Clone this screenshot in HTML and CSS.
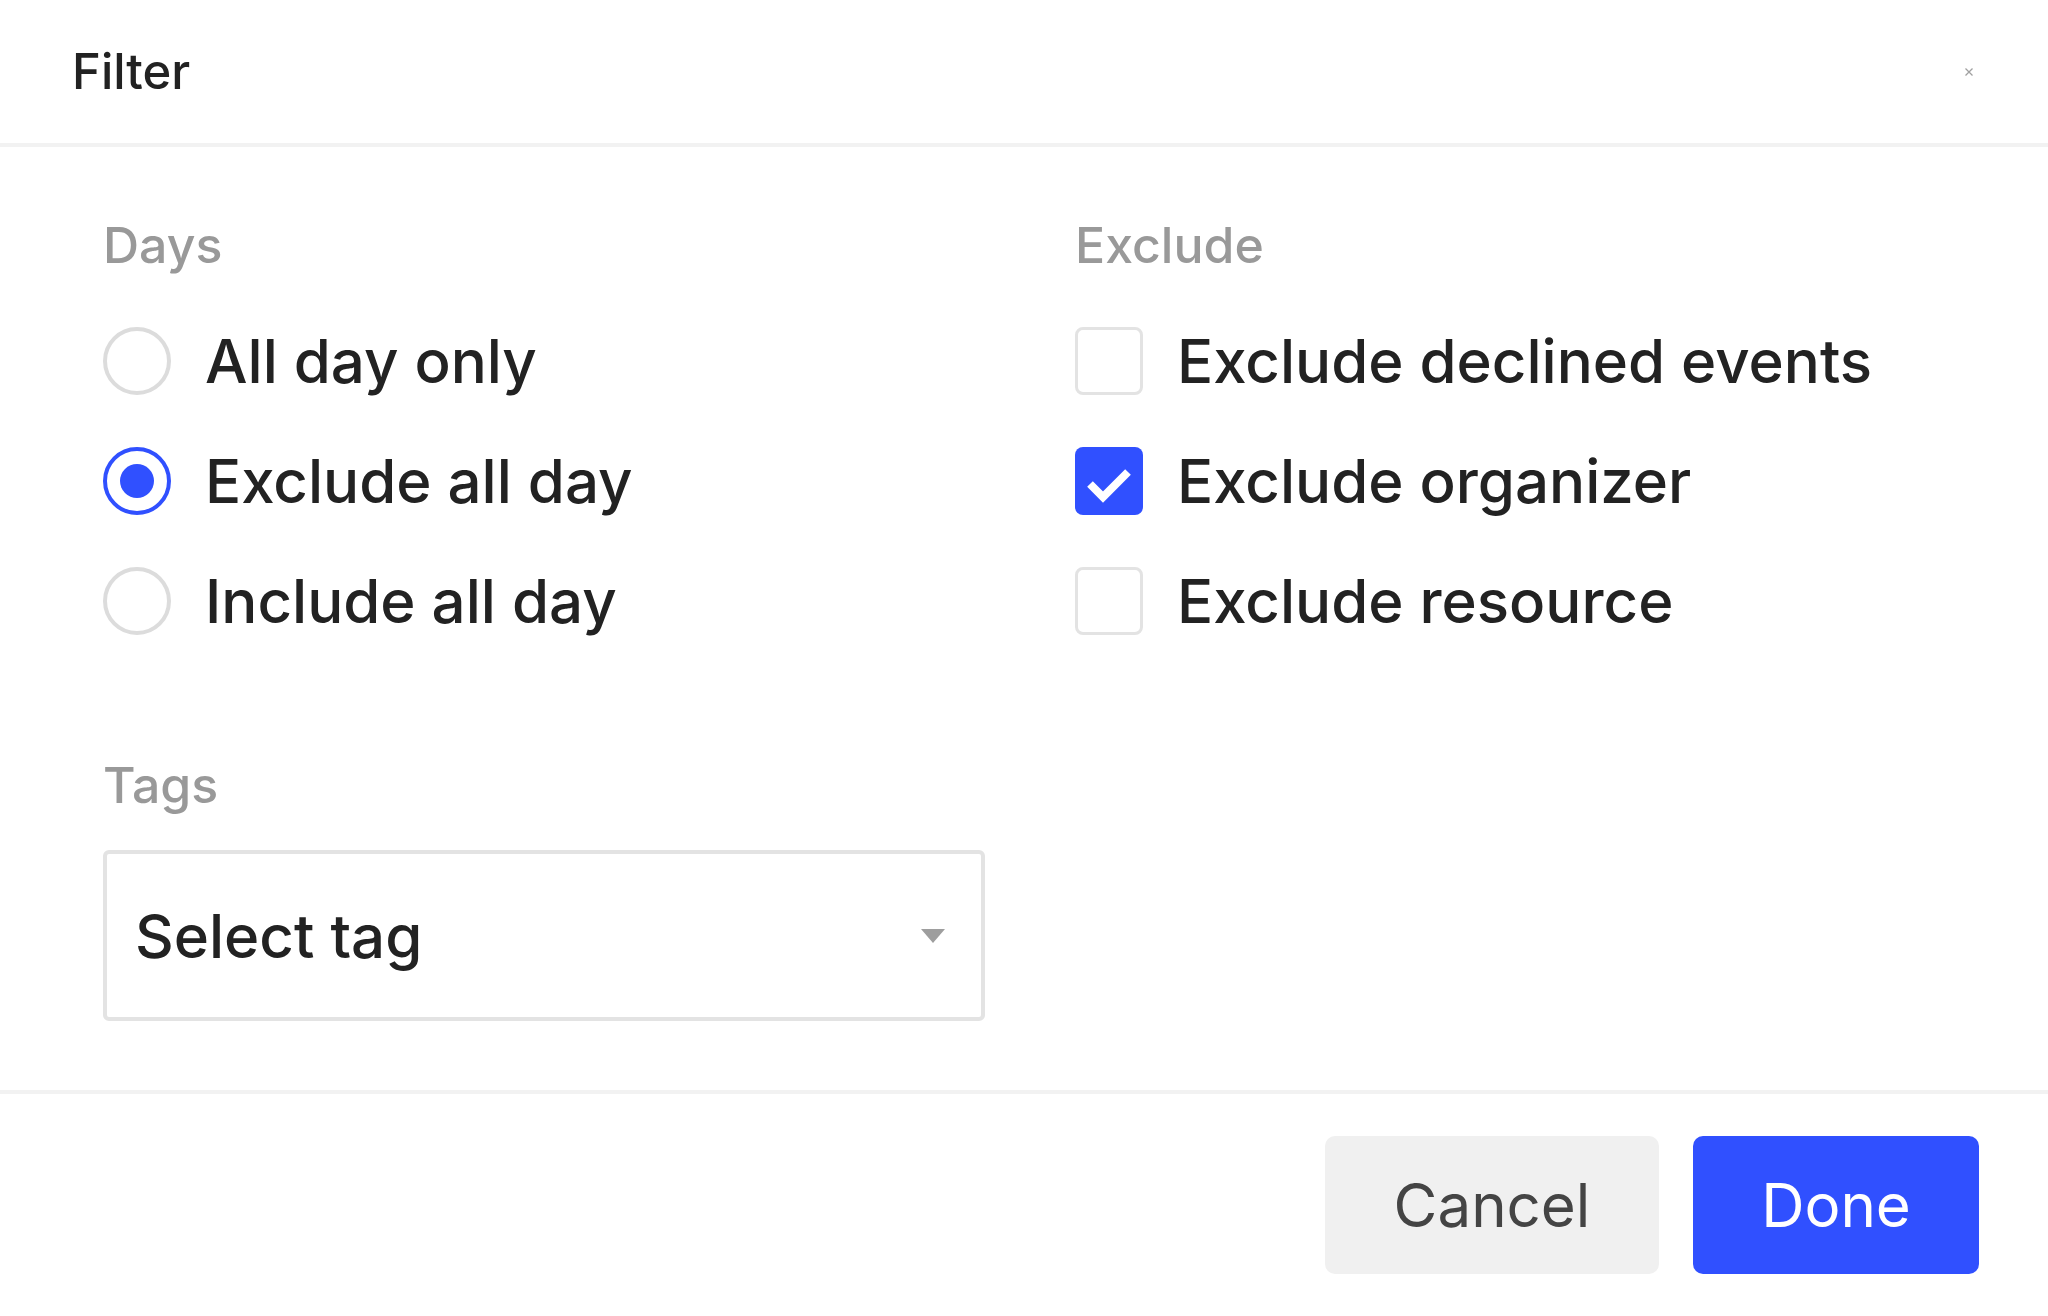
FILE: index.html
```html
<!DOCTYPE html>
<html lang="en">
<head>
<meta charset="utf-8">
<title>Filter</title>
<link rel="stylesheet" href="styles.css">
</head>
<body>
<div class="dialog">
  <header class="header">
    <h1 class="title">Filter</h1>
    <button class="close" aria-label="Close">
      <svg width="10" height="10" viewBox="0 0 10 10"><path d="M1.5 1.5 L8.5 8.5 M8.5 1.5 L1.5 8.5" stroke="#a0a0a0" stroke-width="1.3" fill="none"/></svg>
    </button>
  </header>
  <main class="body">
    <section class="section">
      <div class="label">Days</div>
      <div class="options">
        <div class="option"><span class="radio"></span><span class="opt-text">All day only</span></div>
        <div class="option"><span class="radio checked"></span><span class="opt-text">Exclude all day</span></div>
        <div class="option"><span class="radio"></span><span class="opt-text">Include all day</span></div>
      </div>
    </section>
    <section class="section">
      <div class="label">Exclude</div>
      <div class="options">
        <div class="option"><span class="checkbox"></span><span class="opt-text">Exclude declined events</span></div>
        <div class="option"><span class="checkbox checked"><svg width="68" height="68" viewBox="0 0 68 68"><polyline points="15,37 28,50 53,25" fill="none" stroke="#fff" stroke-width="8"/></svg></span><span class="opt-text">Exclude organizer</span></div>
        <div class="option"><span class="checkbox"></span><span class="opt-text">Exclude resource</span></div>
      </div>
    </section>
    <section class="section tags">
      <div class="label">Tags</div>
      <div class="select">
        <span class="select-text">Select tag</span>
        <svg class="caret" width="24" height="14" viewBox="0 0 24 14"><polygon points="0,0 24,0 12,14" fill="#9e9e9e"/></svg>
      </div>
    </section>
  </main>
  <footer class="footer">
    <button class="btn btn-cancel">Cancel</button>
    <button class="btn btn-done">Done</button>
  </footer>
</div>
</body>
</html>
```
FILE: styles.css
```css
* { box-sizing: border-box; }
html, body { margin: 0; padding: 0; background: #fff; }
body {
  font-family: Inter, "Noto Sans", "Liberation Sans", sans-serif;
  color: #222;
  width: 2048px;
  height: 1316px;
  overflow: hidden;
}
.dialog { width: 2048px; height: 1316px; display: flex; flex-direction: column; }
.header {
  height: 147px;
  border-bottom: 4px solid #f2f2f2;
  display: flex;
  align-items: center;
  justify-content: space-between;
  padding: 0 74px 0 72px;
}
.title { margin: 0; font-size: 49px; font-weight: 500; line-height: 49px; color: #222; }
.close {
  border: 0; background: none; padding: 0; margin: 0;
  width: 10px; height: 10px; display: flex; cursor: pointer;
}
.body {
  display: grid;
  grid-template-columns: 882px 1fr;
  column-gap: 90px;
  row-gap: 125px;
  padding: 73px 0 69px 103px;
  border-bottom: 4px solid #f2f2f2;
}
.section { display: flex; flex-direction: column; }
.label { font-size: 50px; line-height: 50px; color: #999; font-weight: 500; }
.options { display: flex; flex-direction: column; gap: 52px; margin-top: 57px; }
.option { display: flex; align-items: center; height: 68px; gap: 34px; }
.opt-text { font-size: 60px; line-height: 60px; color: #222; font-weight: 500; }
.radio {
  width: 68px; height: 68px; border-radius: 50%;
  border: 4px solid #dcdcdc; flex: none;
  display: flex; align-items: center; justify-content: center;
}
.radio.checked { border-color: #3050ff; }
.radio.checked::after {
  content: ""; width: 34px; height: 34px; border-radius: 50%; background: #3050ff;
}
.checkbox {
  width: 68px; height: 68px; border-radius: 8px;
  border: 3px solid #e3e3e3; flex: none; display: flex;
}
.checkbox.checked { background: #3050ff; border: 0; }
.tags .select { margin-top: 40px; }
.select {
  width: 882px; height: 171px;
  border: 4px solid #e3e3e3; border-radius: 6px;
  display: flex; align-items: center; justify-content: space-between;
  padding: 0 36px 0 28px;
}
.select-text { font-size: 60px; line-height: 60px; color: #222; font-weight: 500; }
.caret { flex: none; }
.footer {
  display: flex; justify-content: flex-end; gap: 34px;
  padding: 42px 69px 0 0;
}
.btn {
  height: 138px; border: 0; border-radius: 10px;
  font-family: Inter, "Noto Sans", "Liberation Sans", sans-serif;
  font-size: 60px; line-height: 60px; cursor: pointer;
}
.btn-cancel { width: 334px; background: #f0f0f0; color: #444; }
.btn-done { width: 286px; background: #3050ff; color: #fff; }
```
